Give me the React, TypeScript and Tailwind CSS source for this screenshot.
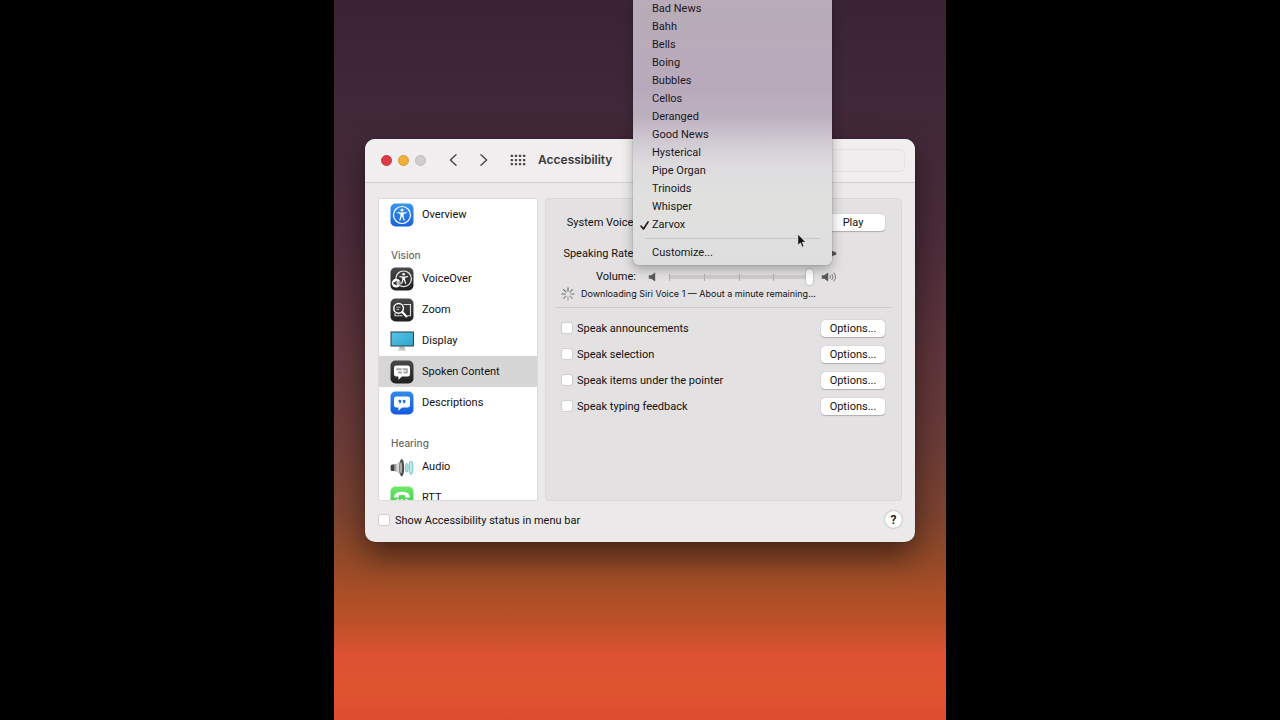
import type { ReactNode } from "react";

const VOICES = [
  "Bad News",
  "Bahh",
  "Bells",
  "Boing",
  "Bubbles",
  "Cellos",
  "Deranged",
  "Good News",
  "Hysterical",
  "Pipe Organ",
  "Trinoids",
  "Whisper",
  "Zarvox",
];

const SPEAK_OPTIONS = [
  { id: "announcements", label: "Speak announcements" },
  { id: "selection", label: "Speak selection" },
  { id: "pointer", label: "Speak items under the pointer" },
  { id: "typing", label: "Speak typing feedback" },
];

interface TileProps {
  from: string;
  to: string;
  id: string;
  children: ReactNode;
}

function Tile({ from, to, id, children }: TileProps) {
  return (
    <svg viewBox="0 0 24 24" className="size-6 shrink-0" aria-hidden="true">
      <defs>
        <linearGradient id={id} x1="0" y1="0" x2="0" y2="1">
          <stop offset="0" stopColor={from} />
          <stop offset="1" stopColor={to} />
        </linearGradient>
      </defs>
      <rect x="0.5" y="0.5" width="23" height="23" rx="5" fill={`url(#${id})`} />
      {children}
    </svg>
  );
}

function Figure() {
  return (
    <g fill="#fff">
      <circle cx="12" cy="7.2" r="1.4" />
      <path d="M7.4 9.1l3.3.5h2.6l3.3-.5.1 1-3.1.8v2.3l1.2 4.1-1.1.4-1.5-4.2h-.4l-1.5 4.2-1.1-.4 1.2-4.1v-2.3l-3.1-.8z" />
    </g>
  );
}

function OverviewIcon() {
  return (
    <Tile id="overview" from="#3a95ea" to="#1a62dc">
      <circle cx="12" cy="12" r="8.5" fill="none" stroke="#fff" strokeWidth="1.2" />
      <Figure />
    </Tile>
  );
}

function VoiceOverIcon() {
  return (
    <Tile id="voiceover" from="#4a4a4a" to="#1f1f1f">
      <circle cx="13.6" cy="11.8" r="7.8" fill="none" stroke="#eee" strokeWidth="1.2" />
      <g transform="translate(2.6 .7) scale(.92)">
        <Figure />
      </g>
      <circle cx="6.2" cy="16.2" r="4.4" fill="#fff" />
      <path d="M3.4 15.2h1.3l2-1.6v5.2l-2-1.6H3.4z" fill="#333" />
      <path d="M7.7 14.8q1 1.4 0 2.8M8.9 14q1.5 2.2 0 4.4" fill="none" stroke="#333" strokeWidth=".6" />
    </Tile>
  );
}

function ZoomIcon() {
  return (
    <Tile id="zoom" from="#4a4a4a" to="#1f1f1f">
      <path d="M13.5 6.5h7v11.2h-3M5 15v2.7h7.5" fill="none" stroke="#ddd" strokeWidth="1.1" />
      <circle cx="8.6" cy="10.4" r="4.8" fill="#333" stroke="#fff" strokeWidth="1.5" />
      <path d="M6.3 9.2h4.2M6.3 11.4h3" stroke="#bbb" strokeWidth="1" />
      <path d="M12.2 14l4.3 4.4" stroke="#fff" strokeWidth="2.2" strokeLinecap="round" />
    </Tile>
  );
}

function DisplayIcon() {
  return (
    <svg viewBox="0 0 24 24" className="size-6 shrink-0" aria-hidden="true">
      <defs>
        <linearGradient id="screen" x1="0" y1="0" x2="1" y2="1">
          <stop offset="0" stopColor="#57c4e4" />
          <stop offset="1" stopColor="#2fa5cd" />
        </linearGradient>
      </defs>
      <path d="M9.2 17.5h5.6v3.2H9.2z" fill="#b9b9b9" />
      <path d="M8 20.4h8v1.4H8z" fill="#d0d0d0" />
      <rect x="1" y="3" width="22.4" height="14" fill="url(#screen)" stroke="#25414b" />
    </svg>
  );
}

function Bubble() {
  return (
    <path
      d="M6.4 5.4h11.2a2.4 2.4 0 0 1 2.4 2.4v6.4a2.4 2.4 0 0 1-2.4 2.4h-5.6l-3.6 3.2v-3.2h-2a2.4 2.4 0 0 1-2.4-2.4V7.8a2.4 2.4 0 0 1 2.4-2.4z"
      fill="#fff"
    />
  );
}

function SpokenContentIcon() {
  return (
    <Tile id="spoken" from="#4a4a4a" to="#1f1f1f">
      <Bubble />
      <path d="M6.2 8.2h5.4v2H6.2zM8 11.6h4v2H8zM12.6 8.2h5.2v5.4h-4.4v-2h2.4v-1.4h-3.2z" fill="#aaa" />
    </Tile>
  );
}

function DescriptionsIcon() {
  return (
    <Tile id="descriptions" from="#2f8bea" to="#1459de">
      <Bubble />
      <path
        d="M11.4 10.2a1.5 1.5 0 1 0-1.7 1.5q-.1.9-1 1.5 2.5-.3 2.7-3zM15.6 10.2a1.5 1.5 0 1 0-1.7 1.5q-.1.9-1 1.5 2.5-.3 2.7-3z"
        fill="#1f6fd8"
      />
    </Tile>
  );
}

function AudioIcon() {
  return (
    <svg viewBox="0 0 24 24" className="size-6 shrink-0" aria-hidden="true">
      <defs>
        <linearGradient id="cone" x1="0" y1="0" x2="1" y2="0">
          <stop offset="0" stopColor="#777" />
          <stop offset=".5" stopColor="#e4e4e4" />
          <stop offset="1" stopColor="#8c8c8c" />
        </linearGradient>
      </defs>
      <rect x=".6" y="9.5" width="5" height="6.6" rx="1.5" fill="#444" />
      <path d="M4 9.5Q9 8.5 11.5 4v17.5Q9 17 4 16z" fill="url(#cone)" />
      <ellipse cx="11.8" cy="12.7" rx="2.4" ry="8.7" fill="#4a4a4a" />
      <ellipse cx="11" cy="12.7" rx="1.2" ry="6" fill="#aaa" />
      <ellipse cx="16.8" cy="12.7" rx="1.4" ry="4.5" fill="#a9dde1" stroke="#7dc8cc" strokeWidth=".9" />
      <ellipse cx="21" cy="12.7" rx="1.9" ry="6.5" fill="#bfe8eb" stroke="#7dc8cc" strokeWidth="1.1" />
    </svg>
  );
}

function RttIcon() {
  return (
    <Tile id="rtt" from="#6fe86a" to="#35c845">
      <path d="M4 11.5q0-5.7 8-5.7t8 5.7h-4.7V9.3q-3.3-.8-6.6 0v2.2z" fill="#fff" />
      <path d="M6.5 13h2.4v2H6.5zM10.8 13h2.4v2h-2.4zM15.1 13h2.4v2h-2.4zM6.5 16.5h2.4v2H6.5zM10.8 16.5h2.4v2h-2.4zM15.1 16.5h2.4v2h-2.4z" fill="#fff" />
    </Tile>
  );
}

function SpeakerIcon() {
  return (
    <svg viewBox="0 0 9 10" className="h-[10px] w-[9px] shrink-0" aria-hidden="true">
      <path d="M.8 3.2h2.4L7.2.4v9.2L3.2 6.8H.8z" fill="#5b5a5b" />
    </svg>
  );
}

function LoudSpeakerIcon() {
  return (
    <svg viewBox="0 0 16 12" className="h-3 w-4 shrink-0" aria-hidden="true">
      <path d="M.8 4.2h2.4L7.2 1.4v9.2L3.2 7.8H.8z" fill="#5b5a5b" />
      <path d="M8.8 4.3q1.3 1.7 0 3.4M10.8 3q2.3 3 0 6M12.8 1.6q3.4 4.4 0 8.8" fill="none" stroke="#6d6c6d" strokeWidth=".9" />
    </svg>
  );
}

function HareIcon() {
  return (
    <svg viewBox="0 0 16 12" className="h-3 w-4 shrink-0" aria-hidden="true">
      <path d="M1 9q2-5 7-5l-3-3q4 0 5.5 3 4 0 5 2.5.3 1.6-2 1.8-2 0-3 1.7H4z" fill="#5b5a5b" />
    </svg>
  );
}

function Spinner() {
  const spokes = ["#555", "#666", "#777", "#888", "#999", "#777", "#666", "#555"];
  return (
    <svg viewBox="0 0 14 14" className="size-[14px] shrink-0" aria-hidden="true">
      {spokes.map((color, i) => (
        <path key={i} d="M7 .8v3.4" stroke={color} strokeWidth="1" strokeLinecap="round" transform={`rotate(${i * 45} 7 7)`} />
      ))}
    </svg>
  );
}

interface SidebarItemProps {
  label: string;
  icon: ReactNode;
  selected?: boolean;
}

function SidebarItem({ label, icon, selected = false }: SidebarItemProps) {
  return (
    <li>
      <button
        type="button"
        aria-current={selected ? "page" : undefined}
        className={
          selected
            ? "flex h-[31px] w-full items-center gap-2 bg-[#d7d6d7] pl-[11px] text-left"
            : "flex h-[31px] w-full items-center gap-2 pl-[11px] text-left"
        }
      >
        {icon}
        {label}
      </button>
    </li>
  );
}

function SidebarHeading({ children }: { children: ReactNode }) {
  return (
    <h2 className="mt-[17px] h-4 pl-3 font-['Inter','Liberation_Sans',sans-serif] text-[10px] leading-4 font-medium text-[#6b696b]">
      {children}
    </h2>
  );
}

function Sidebar() {
  return (
    <nav className="h-[303px] w-40 shrink-0 overflow-hidden border border-[#dcdadb] bg-white">
      <ul>
        <SidebarItem label="Overview" icon={<OverviewIcon />} />
      </ul>
      <SidebarHeading>Vision</SidebarHeading>
      <ul>
        <SidebarItem label="VoiceOver" icon={<VoiceOverIcon />} />
        <SidebarItem label="Zoom" icon={<ZoomIcon />} />
        <SidebarItem label="Display" icon={<DisplayIcon />} />
        <SidebarItem label="Spoken Content" icon={<SpokenContentIcon />} selected />
        <SidebarItem label="Descriptions" icon={<DescriptionsIcon />} />
      </ul>
      <SidebarHeading>Hearing</SidebarHeading>
      <ul>
        <SidebarItem label="Audio" icon={<AudioIcon />} />
        <SidebarItem label="RTT" icon={<RttIcon />} />
      </ul>
    </nav>
  );
}

function PushButton({ children }: { children: ReactNode }) {
  return (
    <button
      type="button"
      className="h-[17px] w-16 shrink-0 rounded-[4px] bg-white text-center leading-[18px] shadow-[0_0_1px_rgba(0,0,0,0.35),0_1px_1px_rgba(0,0,0,0.2)]"
    >
      {children}
    </button>
  );
}

function Checkbox({ id }: { id: string }) {
  return (
    <input
      id={id}
      type="checkbox"
      className="size-3 shrink-0 appearance-none rounded-[3px] border border-[#cfcdce] bg-white"
    />
  );
}

function SliderField({ id }: { id: string }) {
  return (
    <div className="relative mx-3 flex h-4 flex-1 items-center">
      <div className="h-1 w-full bg-[#cfcdce]" />
      <div className="absolute inset-x-0 flex h-[7px] justify-between">
        {[0, 1, 2, 3, 4].map((tick) => (
          <span key={tick} className="w-px bg-[#b3b1b2]" />
        ))}
      </div>
      <input
        id={id}
        type="range"
        min={0}
        max={100}
        defaultValue={100}
        className="absolute -inset-x-1 h-4 appearance-none bg-transparent [&::-webkit-slider-thumb]:h-4 [&::-webkit-slider-thumb]:w-[7px] [&::-webkit-slider-thumb]:appearance-none [&::-webkit-slider-thumb]:rounded-[4px] [&::-webkit-slider-thumb]:bg-white [&::-webkit-slider-thumb]:shadow-[0_0_2px_rgba(0,0,0,0.4)]"
      />
    </div>
  );
}

function SpokenContentPanel() {
  return (
    <section className="min-w-0 flex-1 rounded-[4px] border border-[#d9d7d8] bg-[#e3e1e2] px-[9px] pt-[13px]">
      <div className="pr-[7px] pl-[6px]">
        <div className="flex h-5 items-center">
          <label htmlFor="voice" className="w-[75px] shrink-0 pt-0.5 text-right whitespace-nowrap">
            System Voice:
          </label>
          <select id="voice" defaultValue="Zarvox" className="mx-1 h-[17px] min-w-0 flex-1 appearance-none rounded-[4px] bg-white pl-2">
            <option>Zarvox</option>
          </select>
          <PushButton>Play</PushButton>
        </div>
        <div className="mt-[11px] flex h-5 items-center pr-12">
          <label htmlFor="rate" className="w-[75px] shrink-0 pt-0.5 text-right whitespace-nowrap">
            Speaking Rate:
          </label>
          <span className="w-[21px]" />
          <SliderField id="rate" />
          <HareIcon />
        </div>
        <div className="mt-1 flex h-5 items-center pr-12">
          <label htmlFor="volume" className="mr-3 w-[75px] shrink-0 text-right whitespace-nowrap">
            Volume:
          </label>
          <SpeakerIcon />
          <SliderField id="volume" />
          <LoudSpeakerIcon />
        </div>
        <p className="flex h-[14px] items-center gap-[6px] font-['Inter','Liberation_Sans',sans-serif] text-[9px] leading-[14px] whitespace-nowrap">
          <Spinner />
          Downloading Siri Voice 1 — About a minute remaining...
        </p>
      </div>
      <hr className="mt-[6px] border-[#cfcdce]" />
      <ul className="mt-[7px] pr-[7px] pl-[6px]">
        {SPEAK_OPTIONS.map((option) => (
          <li key={option.id} className="flex h-[26px] items-center">
            <Checkbox id={option.id} />
            <label htmlFor={option.id} className="flex-1 pt-0.5 pl-1">
              {option.label}
            </label>
            <PushButton>Options...</PushButton>
          </li>
        ))}
      </ul>
    </section>
  );
}

function TitleBar() {
  return (
    <header className="flex h-11 items-center border-b border-[#d0cecf] bg-[#f0eeef] pr-[10px] pb-px pl-4">
      <div className="flex gap-[6px]">
        <button type="button" aria-label="Close" className="size-[11px] rounded-full border border-[#c9343f] bg-[#de3c4b]" />
        <button type="button" aria-label="Minimize" className="size-[11px] rounded-full border border-[#d99a2e] bg-[#f0b03c]" />
        <button type="button" aria-label="Zoom window" className="size-[11px] rounded-full border border-[#bcbabb] bg-[#cfcdce]" />
      </div>
      <button type="button" aria-label="Back" className="ml-[11px] flex w-[31px] justify-center">
        <svg viewBox="0 0 8 12" className="h-3 w-2">
          <path d="M7 .8L1.4 6 7 11.2" fill="none" stroke="#444" strokeWidth="1.4" strokeLinecap="round" strokeLinejoin="round" />
        </svg>
      </button>
      <button type="button" aria-label="Forward" className="flex w-[31px] justify-center">
        <svg viewBox="0 0 8 12" className="h-3 w-2">
          <path d="M1 .8L6.6 6 1 11.2" fill="none" stroke="#444" strokeWidth="1.4" strokeLinecap="round" strokeLinejoin="round" />
        </svg>
      </button>
      <button type="button" aria-label="Show all" className="ml-[11px]">
        <svg viewBox="0 0 16 12" className="h-3 w-4">
          {[0, 1, 2, 3].map((col) =>
            [0, 1, 2].map((row) => (
              <rect key={`${col}-${row}`} x={0.7 + col * 4.1} y={0.8 + row * 4.1} width="2.3" height="2.3" rx=".5" fill="#4b4a4b" />
            )),
          )}
        </svg>
      </button>
      <h1 className="ml-3 font-['Inter','Liberation_Sans',sans-serif] text-[12px] font-semibold text-[#3b393b]">
        Accessibility
      </h1>
      <input
        type="search"
        aria-label="Search"
        className="ml-auto h-[23px] w-[120px] rounded-[5px] border border-[#e3e1e2] bg-[#efedee]"
      />
    </header>
  );
}

function VoiceMenu() {
  return (
    <div
      role="menu"
      className="absolute -top-px left-[299px] w-[199px] rounded-b-[6px] bg-[linear-gradient(to_bottom,#b9acb8_0px,#b8aabc_90px,#bdb1bf_118px,#d0cad3_143px,#dddbde_165px,#e1e1df_200px,#dfdedf_265px)] pb-1 text-[#1b171b] shadow-[0_0_1px_rgba(0,0,0,0.6),0_4px_12px_rgba(0,0,0,0.3)]"
    >
      {VOICES.map((voice) => (
        <button
          key={voice}
          type="button"
          role="menuitemradio"
          aria-checked={voice === "Zarvox"}
          className="flex h-[18px] w-full items-center pt-0.5 text-left"
        >
          <span className="flex w-[19px] shrink-0 justify-center pl-1">
            {voice === "Zarvox" && (
              <svg viewBox="0 0 9 9" className="size-[9px]" aria-hidden="true">
                <path d="M1 5l2.5 3L8 1" fill="none" stroke="#1b171b" strokeWidth="1.6" strokeLinecap="round" strokeLinejoin="round" />
              </svg>
            )}
          </span>
          {voice}
        </button>
      ))}
      <hr className="mx-3 mt-[5px] mb-1 border-[#c9c7c8]" />
      <button type="button" role="menuitem" className="flex h-[18px] w-full items-center pt-0.5 pl-[19px] text-left">
        Customize...
      </button>
    </div>
  );
}

function Cursor() {
  return (
    <svg viewBox="0 0 10 16" className="absolute top-[233px] left-[463px] h-4 w-[10px]" aria-hidden="true">
      <path d="M.8 1v11.4l2.6-2.4 1.7 4.2 2-.8-1.7-4.1h3.5z" fill="#111" stroke="#f4f4f4" strokeWidth=".8" />
    </svg>
  );
}

export default function App() {
  return (
    <div className="flex min-h-screen justify-center bg-black font-['Roboto','Liberation_Sans',sans-serif] text-[11px] leading-4 text-[#111]">
      <main className="relative w-full max-w-[612px] overflow-hidden bg-[linear-gradient(to_bottom,#3a2434_0%,#3f2838_14%,#4e2d3a_35%,#5c343c_46%,#6b3c38_61%,#7d4330_71%,#964b28_78%,#ad4f25_83%,#c05029_87%,#dc5232_91%,#df552f_96%,#de4c31_100%)] px-[31px] pt-[139px]">
        <div className="overflow-hidden rounded-[10px] bg-[#ebe9ea] shadow-[0_0_1px_rgba(0,0,0,0.8),0_14px_32px_rgba(0,0,0,0.5)]">
          <TitleBar />
          <div className="flex gap-[7px] px-[13px] pt-[15px]">
            <Sidebar />
            <SpokenContentPanel />
          </div>
          <footer className="flex h-[41px] items-center px-[13px] pb-1">
            <Checkbox id="status" />
            <label htmlFor="status" className="flex-1 pt-0.5 pl-[5px]">
              Show Accessibility status in menu bar
            </label>
            <button
              type="button"
              aria-label="Help"
              className="size-[17px] rounded-full bg-white text-center text-[12px] font-semibold shadow-[0_0_2px_rgba(0,0,0,0.4)]"
            >
              ?
            </button>
          </footer>
        </div>
        <VoiceMenu />
        <Cursor />
      </main>
    </div>
  );
}
